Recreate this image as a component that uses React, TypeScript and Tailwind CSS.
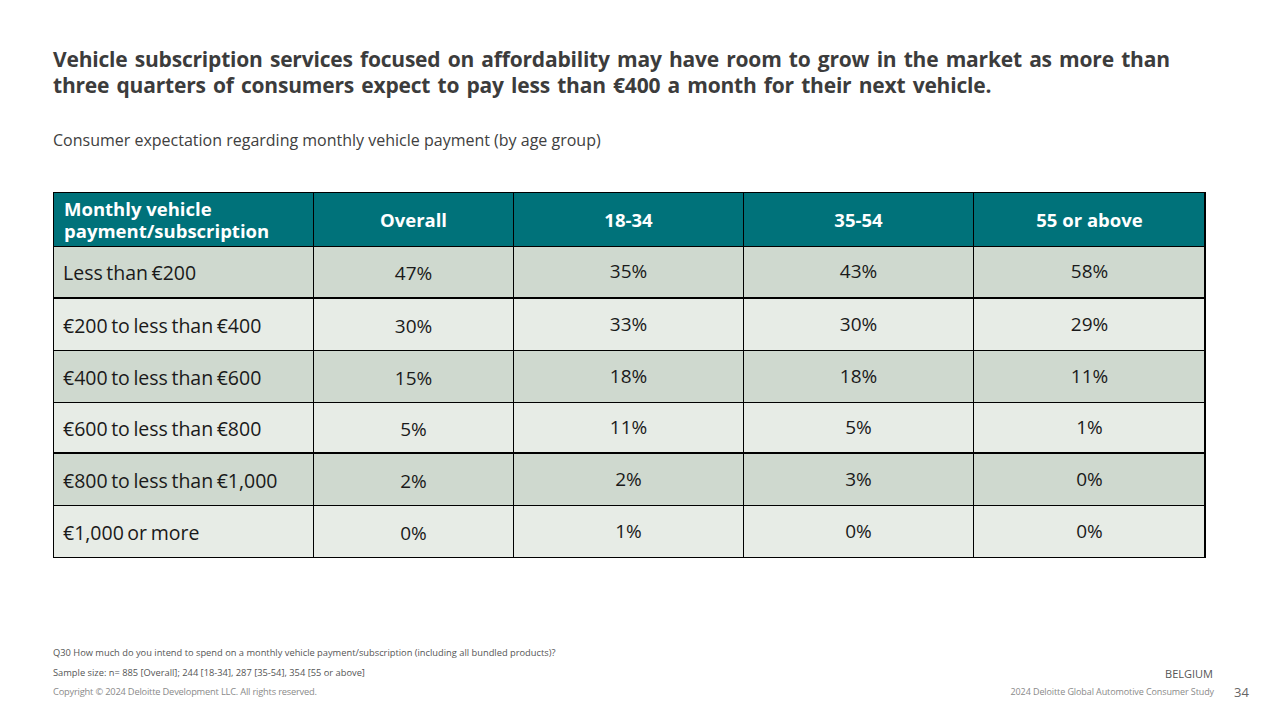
import React from "react";

const rows = [
  { label: "Less than €200", v: ["47%", "35%", "43%", "58%"], dark: true, h: "h-[52px]" },
  { label: "€200 to less than €400", v: ["30%", "33%", "30%", "29%"], dark: false, h: "h-[52px]" },
  { label: "€400 to less than €600", v: ["15%", "18%", "18%", "11%"], dark: true, h: "h-[52px]" },
  { label: "€600 to less than €800", v: ["5%", "11%", "5%", "1%"], dark: false, h: "h-[51px]" },
  { label: "€800 to less than €1,000", v: ["2%", "2%", "3%", "0%"], dark: true, h: "h-[52px]" },
  { label: "€1,000 or more", v: ["0%", "1%", "0%", "0%"], dark: false, h: "h-[51px]" },
];

const heads = ["Overall", "18-34", "35-54", "55 or above"];

export default function App() {
  return (
    <div
      className="w-[1280px] h-[720px] bg-white relative overflow-hidden text-[#404040]"
      style={{ fontFamily: '"Open Sans", "Noto Sans", sans-serif' }}
    >
      <div className="pl-[53px] pt-[46px]">
        <h1 className="w-[1135px] text-[21px] leading-[26px] font-bold text-[#3c3c3c] tracking-[-0.2px] [word-spacing:2px]">
          Vehicle subscription services focused on affordability may have room to grow in the market as more than three quarters of consumers expect to pay less than €400 a month for their next vehicle.
        </h1>
        <p className="mt-[32px] text-[16px] leading-[20px] text-[#404040]">
          Consumer expectation regarding monthly vehicle payment (by age group)
        </p>
      </div>

      <div className="ml-[53px] mt-[42px] w-[1153px] border-t border-l border-r-2 border-b border-black text-[#1a1a1a]">
        <div className="grid grid-cols-[260px_200px_230px_230px_231px] h-[54px] bg-[#00727a] text-white font-bold border-b border-black">
          <div className="flex flex-col justify-center pl-[10px] text-[18.5px] leading-[22px] border-r border-black">
            <span>Monthly vehicle</span>
            <span>payment/subscription</span>
          </div>
          {heads.map((h, i) => (
            <div
              key={h}
              className={`flex items-center justify-center text-[18.5px] ${i < 3 ? "border-r border-black" : ""}`}
            >
              {h}
            </div>
          ))}
        </div>
        {rows.map((r, ri) => (
          <div
            key={r.label}
            className={`grid grid-cols-[260px_200px_230px_230px_231px] ${r.h} ${r.dark ? "bg-[#cfd9cf]" : "bg-[#e7ece6]"} ${ri < rows.length - 1 ? (ri === 0 || ri === 3 ? "border-b-2 border-black" : "border-b border-black") : ""}`}
          >
            <div className="flex items-center pl-[9px] text-[19.5px] [word-spacing:-1.5px] border-r border-black pt-[2px]">
              {r.label}
            </div>
            {r.v.map((v, i) => (
              <div
                key={i}
                className={`flex items-center justify-center text-[19px] ${i === 0 ? "pt-[3px]" : "pb-[1px]"} ${i < 3 ? "border-r border-black" : ""}`}
              >
                {v}
              </div>
            ))}
          </div>
        ))}
      </div>

      <div className="absolute left-[53px] top-[647px] text-[9.3px] leading-[12px] text-[#555]">
        <p>Q30 How much do you intend to spend on a monthly vehicle payment/subscription (including all bundled products)?</p>
        <p className="mt-[8px]">Sample size: n= 885 [Overall]; 244 [18-34], 287 [35-54], 354 [55 or above]</p>
        <p className="mt-[7px] text-[#8a8a8a] tracking-[-0.2px]">Copyright © 2024 Deloitte Development LLC. All rights reserved.</p>
      </div>

      <div className="absolute right-[67px] top-[666px] text-[11px] text-[#555]">BELGIUM</div>
      <div className="absolute right-[66px] top-[685px] text-[9px] text-[#8a8a8a] tracking-[-0.1px]">
        2024 Deloitte Global Automotive Consumer Study
      </div>
      <div className="absolute left-[1234px] top-[683px] text-[13px] text-[#666]">34</div>
    </div>
  );
}
